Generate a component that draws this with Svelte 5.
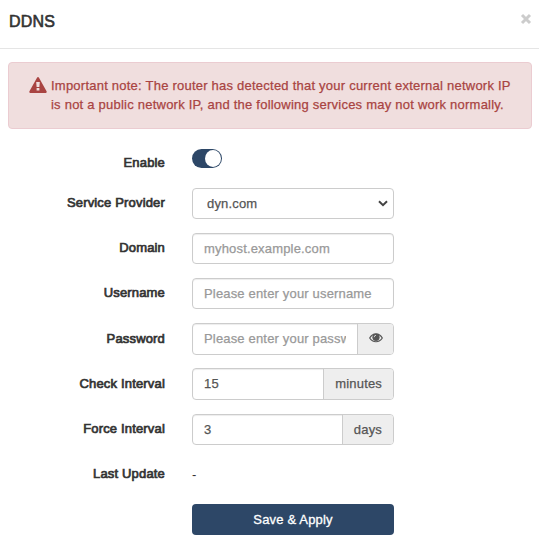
<script>
    let enabled = true;
    let provider = "dyn.com";
    let domain = "";
    let username = "";
    let password = "";
    let showPassword = false;
    let checkInterval = "15";
    let forceInterval = "3";
    let lastUpdate = "-";

    function toggleEnabled() {
        enabled = !enabled;
    }

    function togglePassword() {
        showPassword = !showPassword;
    }
</script>

<div class="modal">
    <header>
        <h4>DDNS</h4>
        <button class="close" aria-label="Close">
            <svg viewBox="0 0 12 12" width="12" height="12">
                <path d="M2 2 L10 10 M10 2 L2 10" />
            </svg>
        </button>
    </header>

    <div class="alert">
        <svg class="warning" viewBox="0 0 18 16" width="18" height="16">
            <path
                fill-rule="evenodd"
                d="M9 0 Q9.6 0 10 .7 L17.7 14.5 Q18 15.8 16.8 16 H1.2 Q0 15.8 .3 14.5 L8 .7 Q8.4 0 9 0 Z M7.2 5 L7.6 10 H10.4 L10.8 5 Z M7.6 11 V13.6 H10.4 V11 Z"
            />
        </svg>
        <p>
            <span>Important note: The router has detected that your current external network IP</span>
            <span>is not a public network IP, and the following services may not work normally.</span>
        </p>
    </div>

    <form>
        <div class="row enable">
            <span class="label">Enable</span>
            <button
                type="button"
                class="switch"
                class:on={enabled}
                aria-label="Enable"
                on:click={toggleEnabled}
            ></button>
        </div>
        <div class="row">
            <label class="label" for="provider">Service Provider</label>
            <div class="select">
                <select id="provider" bind:value={provider}>
                    <option>dyn.com</option>
                </select>
                <svg viewBox="0 0 10 7" width="10" height="7">
                    <path d="M1 1.2 L5 5.2 L9 1.2" />
                </svg>
            </div>
        </div>
        <div class="row">
            <label class="label" for="domain">Domain</label>
            <div class="group">
                <input id="domain" placeholder="myhost.example.com" bind:value={domain} />
            </div>
        </div>
        <div class="row">
            <label class="label" for="username">Username</label>
            <div class="group">
                <input
                    id="username"
                    placeholder="Please enter your username"
                    bind:value={username}
                />
            </div>
        </div>
        <div class="row tall password">
            <label class="label" for="password">Password</label>
            <div class="group">
                <input
                    id="password"
                    type={showPassword ? "text" : "password"}
                    placeholder="Please enter your password"
                    value={password}
                    on:input={(e) => (password = e.currentTarget.value)}
                />
                <button
                    type="button"
                    class="addon eye"
                    aria-label="Show password"
                    on:click={togglePassword}
                >
                    <svg viewBox="0 0 14 10" width="14" height="10">
                        <path class="lid" d="M.7 5 C3.7 -.6 10.3 -.6 13.3 5 C10.3 10 3.7 10 .7 5 Z" />
                        <circle cx="7" cy="4.3" r="3.6" />
                        <path class="glint" d="M5.2 4.2 Q5.2 2.4 7 2.3" />
                    </svg>
                </button>
            </div>
        </div>
        <div class="row tall">
            <label class="label" for="check">Check Interval</label>
            <div class="group">
                <input id="check" bind:value={checkInterval} />
                <span class="addon">minutes</span>
            </div>
        </div>
        <div class="row">
            <label class="label" for="force">Force Interval</label>
            <div class="group">
                <input id="force" bind:value={forceInterval} />
                <span class="addon">days</span>
            </div>
        </div>
        <div class="row">
            <span class="label">Last Update</span>
            <span class="value">{lastUpdate}</span>
        </div>
        <div class="row">
            <span class="label"></span>
            <button type="button" class="save">Save &amp; Apply</button>
        </div>
    </form>
</div>

<style>
    :global(body) {
        background: #fff;
    }

    .modal,
    input,
    select,
    button {
        font-family: "Liberation Sans", Arial, sans-serif;
        font-size: 13px;
        letter-spacing: 0.17px;
    }

    .modal {
        height: 554px;
        color: #333;
        overflow: hidden;
    }

    header {
        display: flex;
        justify-content: space-between;
        height: 49px;
        padding: 0 7px 0 9px;
        border-bottom: 1px solid #e5e5e5;
        box-sizing: border-box;
    }

    h4 {
        margin: 12px 0 0;
        font-size: 16px;
        line-height: 19px;
        font-weight: 400;
        letter-spacing: 0.2px;
        -webkit-text-stroke: 0.6px #333;
    }

    .close {
        height: 12px;
        margin-top: 13px;
        padding: 0;
        border: none;
        background: none;
        cursor: pointer;
    }

    .close svg {
        display: block;
        fill: none;
        stroke: #ccc;
        stroke-width: 3;
    }

    .alert {
        display: flex;
        height: 67px;
        margin: 13px 7px 0 8px;
        padding: 13px 0 0 20px;
        border: 1px solid #ebccd1;
        border-radius: 4px;
        background: #f0dede;
        color: #a94442;
        box-sizing: border-box;
    }

    .warning {
        flex: none;
        margin: 1px 4px 0 0;
        fill: #a94442;
    }

    .alert p {
        margin: 0;
        line-height: 19px;
        letter-spacing: 0.23px;
        white-space: nowrap;
        -webkit-text-stroke: 0.25px #a94442;
    }

    .alert span {
        display: block;
    }

    form {
        display: flex;
        flex-direction: column;
        gap: 14px;
        padding-top: 14px;
    }

    .row {
        display: flex;
        flex: none;
        align-items: center;
        height: 31px;
    }

    .row.tall {
        height: 32px;
    }

    .row.password {
        margin-bottom: -1px;
    }

    .label {
        width: 165px;
        margin: 0 27px 2px 0;
        text-align: right;
        -webkit-text-stroke: 0.7px #333;
    }

    .enable .label {
        margin: 8px 27px 0 0;
    }

    .switch {
        display: flex;
        width: 30px;
        height: 19px;
        padding: 1px;
        border: none;
        border-radius: 10px;
        background: #bbb;
        cursor: pointer;
    }

    .switch::after {
        content: "";
        width: 16px;
        height: 17px;
        border-radius: 50%;
        background: #fff;
    }

    .switch.on {
        justify-content: flex-end;
        background: #2d4767;
    }

    .group,
    .select {
        display: flex;
        width: 202px;
        height: 100%;
        border: 1px solid #ccc;
        border-radius: 4px;
        background: #fff;
        box-sizing: border-box;
        overflow: hidden;
    }

    .group {
        box-shadow: inset 0 1px 1px rgba(0, 0, 0, 0.075);
    }

    .select {
        position: relative;
    }

    .select svg {
        position: absolute;
        right: 5px;
        top: 11px;
        fill: none;
        stroke: #444;
        stroke-width: 2;
        pointer-events: none;
    }

    input,
    select {
        flex: 1;
        min-width: 0;
        padding: 0 11px;
        border: none;
        outline: none;
        background: transparent;
        color: #555;
        -webkit-text-stroke: 0.25px;
    }

    .tall input {
        padding-bottom: 1px;
    }

    select {
        appearance: none;
        padding-left: 14px;
    }

    input::placeholder {
        color: #999;
        opacity: 1;
    }

    .addon {
        display: flex;
        align-items: center;
        padding: 0 11px 1px 11px;
        border: none;
        border-left: 1px solid #ccc;
        background: #eee;
        color: #555;
        -webkit-text-stroke: 0.25px;
    }

    .eye {
        padding: 0 10.5px;
        cursor: pointer;
    }

    .eye svg {
        margin-bottom: 2px;
        fill: #555;
    }

    .eye .lid {
        fill: none;
        stroke: #555;
        stroke-width: 1.2;
    }

    .eye .glint {
        fill: none;
        stroke: #eee;
        stroke-width: 0.8;
    }

    .save {
        width: 202px;
        height: 31px;
        padding: 0;
        border: none;
        border-radius: 4px;
        background: #2d4767;
        color: #fff;
        cursor: pointer;
        -webkit-text-stroke: 0.3px #fff;
    }
</style>
